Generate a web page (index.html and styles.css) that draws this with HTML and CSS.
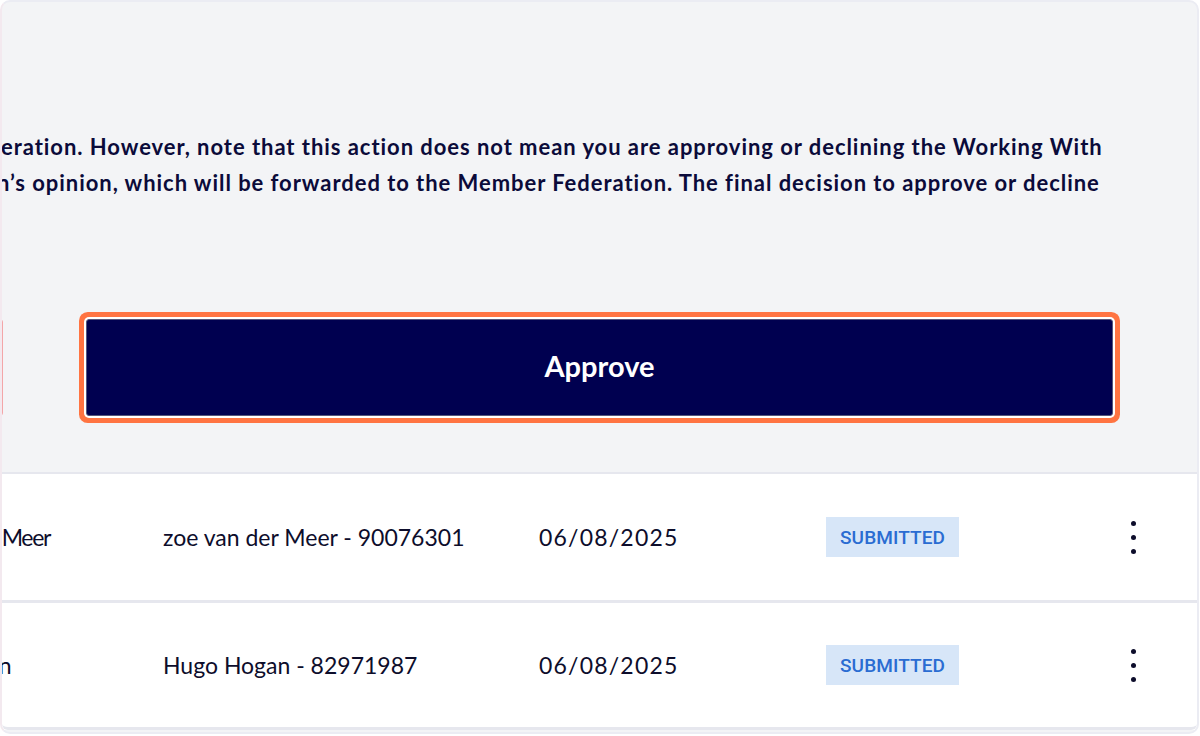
FILE: index.html
```html
<!DOCTYPE html>
<html lang="en">
<head>
<meta charset="utf-8">
<title>Approve</title>
<link rel="stylesheet" href="styles.css">
</head>
<body>
<div class="panel">
  <section class="confirm">
    <div class="notice">
      <div class="line line-1">eration. However, note that this action does not mean you are approving or declining the Working With</div>
      <div class="line line-2">n’s opinion, which will be forwarded to the Member Federation. The final decision to approve or decline</div>
    </div>
    <div class="actions">
      <button class="btn btn-decline" type="button">Decline</button>
      <button class="btn btn-approve" type="button">Approve</button>
    </div>
  </section>
  <section class="table">
    <div class="row">
      <div class="cells">
        <div class="cell name">zoe van der Meer</div>
        <div class="cell owner">zoe van der Meer - 90076301</div>
        <div class="cell date">06/08/2025</div>
        <div class="cell status"><span class="badge">SUBMITTED</span></div>
        <div class="cell menu"><span class="kebab"><i></i><i></i><i></i></span></div>
      </div>
    </div>
    <div class="row">
      <div class="cells">
        <div class="cell name">Hugo Hogan</div>
        <div class="cell owner">Hugo Hogan - 82971987</div>
        <div class="cell date">06/08/2025</div>
        <div class="cell status"><span class="badge">SUBMITTED</span></div>
        <div class="cell menu"><span class="kebab"><i></i><i></i><i></i></span></div>
      </div>
    </div>
  </section>
</div>
</body>
</html>
```
FILE: styles.css
```css
* { box-sizing: border-box; }
html, body { margin: 0; padding: 0; }
body {
  background: #ffffff;
  font-family: "Lato", "Noto Sans", sans-serif;
  color: #0b0b33;
  width: 1200px;
  height: 736px;
  overflow: hidden;
}
.panel {
  width: 1199px;
  height: 734px;
  background: #f3f4f6;
  border: 2px solid #ebecf3;
  border-left-color: #f3e9ef;
  border-radius: 10px;
  overflow: hidden;
  display: flex;
  flex-direction: column;
}
.confirm {
  padding-top: 127px;
  height: 470px;
}
.notice {
  font-size: 22px;
  font-weight: 700;
  line-height: 36px;
  letter-spacing: 0.95px;
  color: #0b0b3a;
}
.line { white-space: nowrap; }
.line-1 { margin-left: -1px; }
.line-2 { margin-left: -5px; }
.actions {
  margin-top: 118px;
  margin-left: -397px;
  display: flex;
  gap: 83px;
}
.btn {
  height: 97px;
  font-family: "Lato", "Noto Sans", sans-serif;
  font-size: 29px;
  font-weight: 700;
  border-radius: 3px;
  cursor: pointer;
  padding: 0 0 4px;
}
.btn-decline {
  width: 398px;
  background: transparent;
  border: 1px solid #f3a6a8;
  color: #d33;
}
.btn-approve {
  width: 1027px;
  background: #000050;
  color: #ffffff;
  border: 1px solid #55557a;
  box-shadow: 0 0 0 2px #ffffff, 0 0 0 7px #ff7442;
}
.table {
  background: #ffffff;
  border-top: 2px solid #e6e7ee;
}
.row {
  height: 129px;
  border-bottom: 3px solid #e6e7ee;
  overflow: hidden;
  display: flex;
  align-items: center;
}
.row:last-child {
  height: 127px;
  border-radius: 0 0 6px 6px;
}
.cells {
  margin-left: -106px;
  display: grid;
  grid-template-columns: 267px 376px 287px 280px 54px;
  align-items: center;
  font-size: 23px;
  font-weight: 400;
  color: #0d0d2b;
}
.cell { white-space: nowrap; }
.name { letter-spacing: -1.3px; }
.date { letter-spacing: 1.2px; }
.badge {
  display: inline-flex;
  align-items: center;
  height: 40px;
  padding: 0 14px;
  background: #d7e6f8;
  color: #2a6cd2;
  font-family: "Roboto", "Liberation Sans", sans-serif;
  font-size: 19px;
  font-weight: 500;
  letter-spacing: 0.1px;
}
.menu { display: flex; justify-content: center; }
.kebab {
  display: flex;
  flex-direction: column;
  gap: 9px;
}
.kebab i {
  display: block;
  width: 5px;
  height: 5px;
  border-radius: 50%;
  background: #0d0d2b;
}
```
